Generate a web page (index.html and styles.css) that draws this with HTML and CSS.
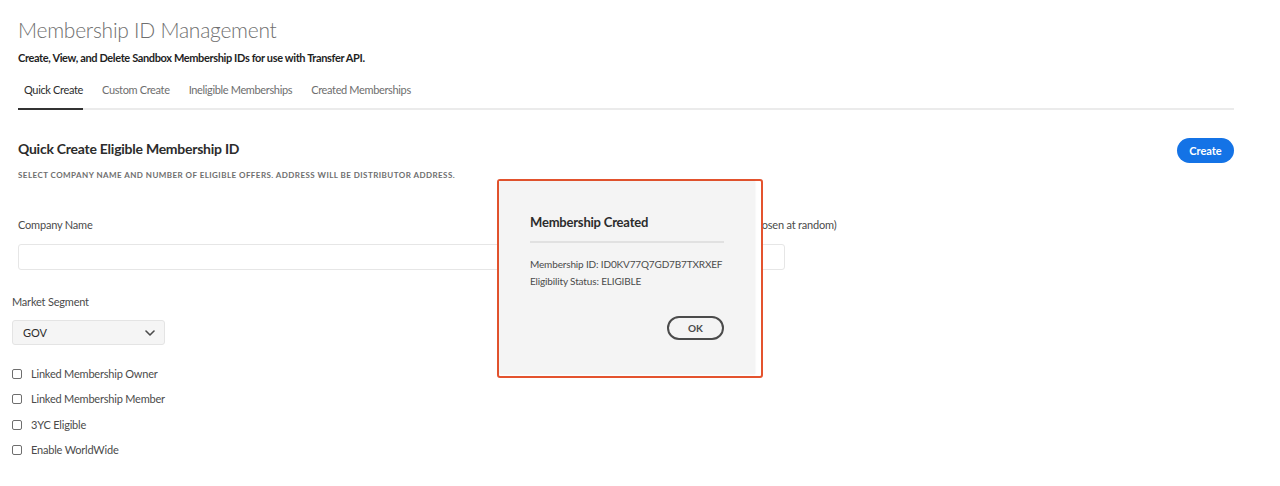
FILE: index.html
```html
<!DOCTYPE html>
<html lang="en">
<head>
<meta charset="utf-8">
<title>Membership ID Management</title>
<link rel="stylesheet" href="styles.css">
</head>
<body>
<div class="page">
  <header class="page-head">
    <h1 class="title">Membership ID Management</h1>
    <p class="subtitle">Create, View, and Delete Sandbox Membership IDs for use with Transfer API.</p>
    <nav class="tabs">
      <span class="tab active">Quick Create</span>
      <span class="tab">Custom Create</span>
      <span class="tab">Ineligible Memberships</span>
      <span class="tab">Created Memberships</span>
    </nav>
  </header>

  <section class="panel">
    <div class="panel-head">
      <div>
        <h2 class="panel-title">Quick Create Eligible Membership ID</h2>
        <p class="hint">Select company name and number of eligible offers. Address will be distributor address.</p>
      </div>
      <button class="btn-primary" type="button">Create</button>
    </div>

    <div class="field-row">
      <div class="field field-company">
        <label class="label">Company Name</label>
        <div class="input"></div>
      </div>
      <div class="field field-offers">
        <label class="label nowrap">Number of Eligible Offers (chosen at random)</label>
        <div class="input"></div>
      </div>
    </div>

    <div class="segment">
      <label class="label">Market Segment</label>
      <div class="select">
        <span>GOV</span>
        <svg class="chev" width="10" height="6" viewBox="0 0 10 6"><path d="M1 1l4 4 4-4" fill="none" stroke="#4b4b4b" stroke-width="1.6" stroke-linecap="round" stroke-linejoin="round"/></svg>
      </div>
      <ul class="checks">
        <li><span class="box"></span>Linked Membership Owner</li>
        <li><span class="box"></span>Linked Membership Member</li>
        <li><span class="box"></span>3YC Eligible</li>
        <li><span class="box"></span>Enable WorldWide</li>
      </ul>
    </div>
  </section>
</div>

<div class="annotation">
  <div class="dialog">
    <h3 class="dialog-title">Membership Created</h3>
    <div class="dialog-body">
      <p>Membership ID: ID0KV77Q7GD7B7TXRXEF</p>
      <p>Eligibility Status: ELIGIBLE</p>
    </div>
    <div class="dialog-actions">
      <button class="btn-outline" type="button">OK</button>
    </div>
  </div>
</div>
</body>
</html>
```

FILE: styles.css
```css
* { box-sizing: border-box; }
html, body { margin: 0; padding: 0; background: #fff; }
body {
  font-family: Lato, "Open Sans", "Liberation Sans", sans-serif;
  color: #4b4b4b;
  width: 1280px;
  height: 486px;
  overflow: hidden;
  position: relative;
}
.page { padding: 15px 46px 0 18px; }

.title {
  margin: 0;
  font-size: 21px;
  font-weight: 300;
  color: #6f6f6f;
  line-height: 30px;
  letter-spacing: -0.25px;
}
.subtitle {
  margin: 5px 0 0;
  font-size: 11px;
  font-weight: 700;
  color: #1f1f1f;
  line-height: 16px;
  letter-spacing: -0.37px;
}
.tabs {
  display: flex;
  gap: 19px;
  margin-top: 16px;
  border-bottom: 2px solid #ebebeb;
}
.tab {
  font-size: 11px;
  color: #6e6e6e;
  line-height: 16px;
  letter-spacing: -0.35px;
  padding: 0 0 10px;
  margin-bottom: -2px;
  border-bottom: 2px solid transparent;
}
.tab.active {
  color: #2c2c2c;
  padding-left: 6px;
  border-bottom-color: #323232;
}

.panel { padding-top: 29px; }
.panel-head {
  display: flex;
  justify-content: space-between;
  align-items: flex-start;
}
.panel-title {
  margin: 0;
  font-size: 14px;
  font-weight: 700;
  color: #2c2c2c;
  line-height: 20px;
  letter-spacing: -0.25px;
}
.hint {
  margin: 10px 0 0;
  font-size: 8px;
  font-weight: 700;
  color: #6e6e6e;
  text-transform: uppercase;
  letter-spacing: 0.45px;
  line-height: 12px;
}
.btn-primary {
  margin-top: -1px;
  height: 25px;
  width: 57px;
  border: 0;
  border-radius: 13px;
  background: #1473e6;
  color: #fff;
  font-family: inherit;
  font-size: 11px;
  font-weight: 700;
  padding: 0;
}

.field-row {
  display: flex;
  gap: 12px;
  margin-top: 36px;
  width: 767px;
}
.field { display: flex; flex-direction: column; }
.field-company { flex: 1; }
.field-offers { width: 157px; }
.label {
  font-size: 11px;
  color: #4b4b4b;
  line-height: 16px;
  letter-spacing: -0.2px;
}
.nowrap { white-space: nowrap; }
.input {
  margin-top: 11px;
  height: 26px;
  border: 1px solid #e6e6e6;
  border-radius: 3px;
  background: #fff;
}

.segment { margin: 20px 0 0 -6px; }
.select {
  margin-top: 10px;
  width: 153px;
  height: 25px;
  background: #f5f5f5;
  border: 1px solid #e4e4e4;
  border-radius: 3px;
  display: flex;
  align-items: center;
  justify-content: space-between;
  padding: 0 9px 0 10px;
  font-size: 11px;
  color: #2c2c2c;
}
.checks {
  list-style: none;
  margin: 21px 0 0;
  padding: 0;
  display: flex;
  flex-direction: column;
  gap: 9.4px;
}
.checks li {
  display: flex;
  align-items: center;
  gap: 9px;
  font-size: 11px;
  color: #4b4b4b;
  line-height: 16px;
  letter-spacing: -0.2px;
}
.box {
  width: 10px;
  height: 10px;
  border: 1.5px solid #6e6e6e;
  border-radius: 2px;
}

.annotation {
  position: absolute;
  left: 497px;
  top: 179px;
  width: 266px;
  height: 199px;
  border: 2px solid #e4532e;
  border-radius: 3px;
  background: #fff;
}
.dialog {
  width: 256px;
  height: 193px;
  background: #f4f4f4;
  padding: 32px 31px 0;
  box-shadow: 0 0 2px rgba(0,0,0,0.08);
}
.dialog-title {
  margin: 0;
  font-size: 13px;
  font-weight: 700;
  color: #2c2c2c;
  line-height: 18px;
  letter-spacing: -0.2px;
  padding-bottom: 10px;
  border-bottom: 2px solid #e1e1e1;
}
.dialog-body { margin-top: 13px; }
.dialog-body p {
  margin: 0;
  font-size: 10px;
  color: #4b4b4b;
  line-height: 17px;
  white-space: nowrap;
  letter-spacing: -0.15px;
}
.dialog-actions {
  display: flex;
  justify-content: flex-end;
  margin-top: 26px;
}
.btn-outline {
  width: 57px;
  height: 24px;
  border: 2px solid #4b4b4b;
  border-radius: 12px;
  background: transparent;
  font-family: inherit;
  font-size: 10px;
  font-weight: 700;
  color: #4b4b4b;
  padding: 0;
}
```
